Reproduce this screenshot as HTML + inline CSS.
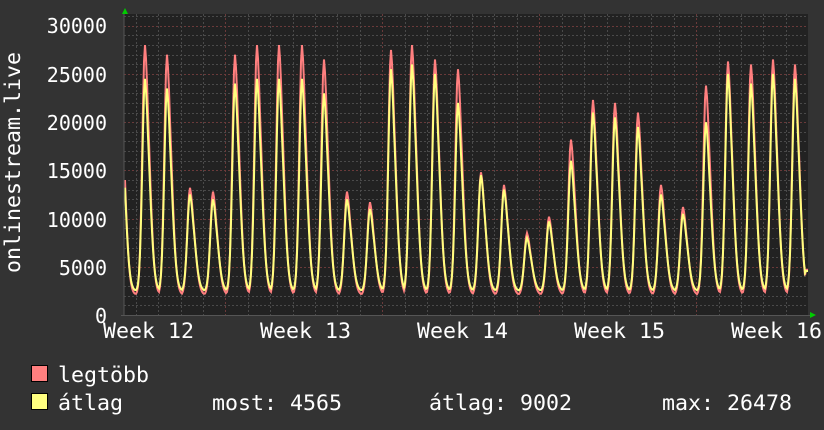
<!DOCTYPE html><html><head><meta charset="utf-8"><style>
html,body{margin:0;padding:0;background:#333333;width:824px;height:430px;overflow:hidden}
svg{display:block}
text{font-family:"DejaVu Sans Mono","Liberation Mono",monospace;font-size:21.6px;fill:#ffffff}
text.y{font-size:20px}
</style></head><body>
<svg id="s" width="824" height="430" xmlns="http://www.w3.org/2000/svg">
<rect x="124" y="14" width="684" height="301" fill="#222222"/>
<g id="grid"></g>
<polyline id="mx" fill="none" stroke="#ff7f7f" stroke-width="2"/>
<polyline id="av" fill="none" stroke="#ffff7f" stroke-width="2"/>
<line x1="124" y1="14" x2="124" y2="316" stroke="#555" stroke-width="1"/>
<line x1="121" y1="315.5" x2="810" y2="315.5" stroke="#555" stroke-width="1"/>
<polygon points="122,14 128,14 125,8" fill="#00cc00"/>
<polygon points="810,312 810,318 816,315" fill="#00cc00"/>
<text class="y" x="107" y="33" text-anchor="end">30000</text>
<text class="y" x="107" y="82" text-anchor="end">25000</text>
<text class="y" x="107" y="130" text-anchor="end">20000</text>
<text class="y" x="107" y="178" text-anchor="end">15000</text>
<text class="y" x="107" y="227" text-anchor="end">10000</text>
<text class="y" x="107" y="275" text-anchor="end">5000</text>
<text class="y" x="107" y="323" text-anchor="end">0</text>
<text transform="translate(20,273) rotate(-90)">onlinestream.live</text>
<text x="103" y="338">Week 12</text>
<text x="260" y="338">Week 13</text>
<text x="417" y="338">Week 14</text>
<text x="574" y="338">Week 15</text>
<text x="731" y="338">Week 16</text>
<rect x="31.5" y="365.5" width="16" height="16" fill="#ff7f7f" stroke="#000"/>
<text x="58" y="382">legtöbb</text>
<rect x="31.5" y="393.5" width="16" height="16" fill="#ffff7f" stroke="#000"/>
<text x="58" y="410">átlag</text>
<text x="212" y="410">most: 4565</text>
<text x="429" y="410">átlag: 9002</text>
<text x="662" y="410">max: 26478</text>
</svg>
<script>
var g=document.getElementById('grid'),h='';
function Y(v){return 315-v*0.00964;}
for(var v=1000;v<=31000;v+=1000){var y=Math.round(Y(v))+0.5;var red=v%5000==0;
h+='<line x1="124" x2="808" y1="'+y+'" y2="'+y+'" stroke="'+(red?'#6a3a3a':'#4a4a4a')+'" stroke-dasharray="2,2"/>';}
for(var i=0;i<31;i++){var x=Math.round(135.7+22.42*i)+0.5;if(x>808)break;var red=((i-4)%7==0);
h+='<line y1="14" y2="315" x1="'+x+'" x2="'+x+'" stroke="'+(red?'#6a3a3a':'#4a4a4a')+'" stroke-dasharray="2,2"/>';}
g.innerHTML=h;
var P=[[120,26000,24000],[145,28000,24500],[167,27000,23500],[190,13200,12500],[213,12800,12000],[235,27000,24000],[257,28000,24500],[279,28000,24500],[302,28000,24500],[324,26500,23000],[347,12800,12000],[370,11700,11000],[391,27500,25500],[412,28000,26000],[435,26500,25000],[458,25500,22000],[481,14800,14500],[504,13500,13000],[527,8500,8000],[549,10200,9700],[571,18200,16000],[593,22300,21000],[615,22000,20500],[638,21000,19500],[661,13500,12500],[683,11200,10500],[706,23800,20000],[728,26300,25000],[751,26000,24000],[773,26500,25000],[795,26000,24500],[817,20000,19000]];
function val(x,k){
 var best=0;
 for(var i=0;i<P.length;i++){var d=x-P[i][0];var pk=P[i][k];var mn=k==1?2100:2500;
  var w; if(d<0) w=Math.exp(-Math.pow(d/3.8,2)); else w=Math.exp(-Math.pow(d/6.5,2))*0.9+ (d<3?0.1*(1-d/3):0);
  var v=mn+(pk-mn)*w; if(v>best)best=v;}
 return best;}
var a='',b='';
for(var x=125;x<=808;x+=1){var vm=val(x,1),va=val(x,2);
 if(x>=806){vm=4700;va=4565;}
 a+=x+','+Y(vm).toFixed(1)+' ';b+=x+','+Y(va).toFixed(1)+' ';}
document.getElementById('mx').setAttribute('points',a);
document.getElementById('av').setAttribute('points',b);
</script>
</body></html>
